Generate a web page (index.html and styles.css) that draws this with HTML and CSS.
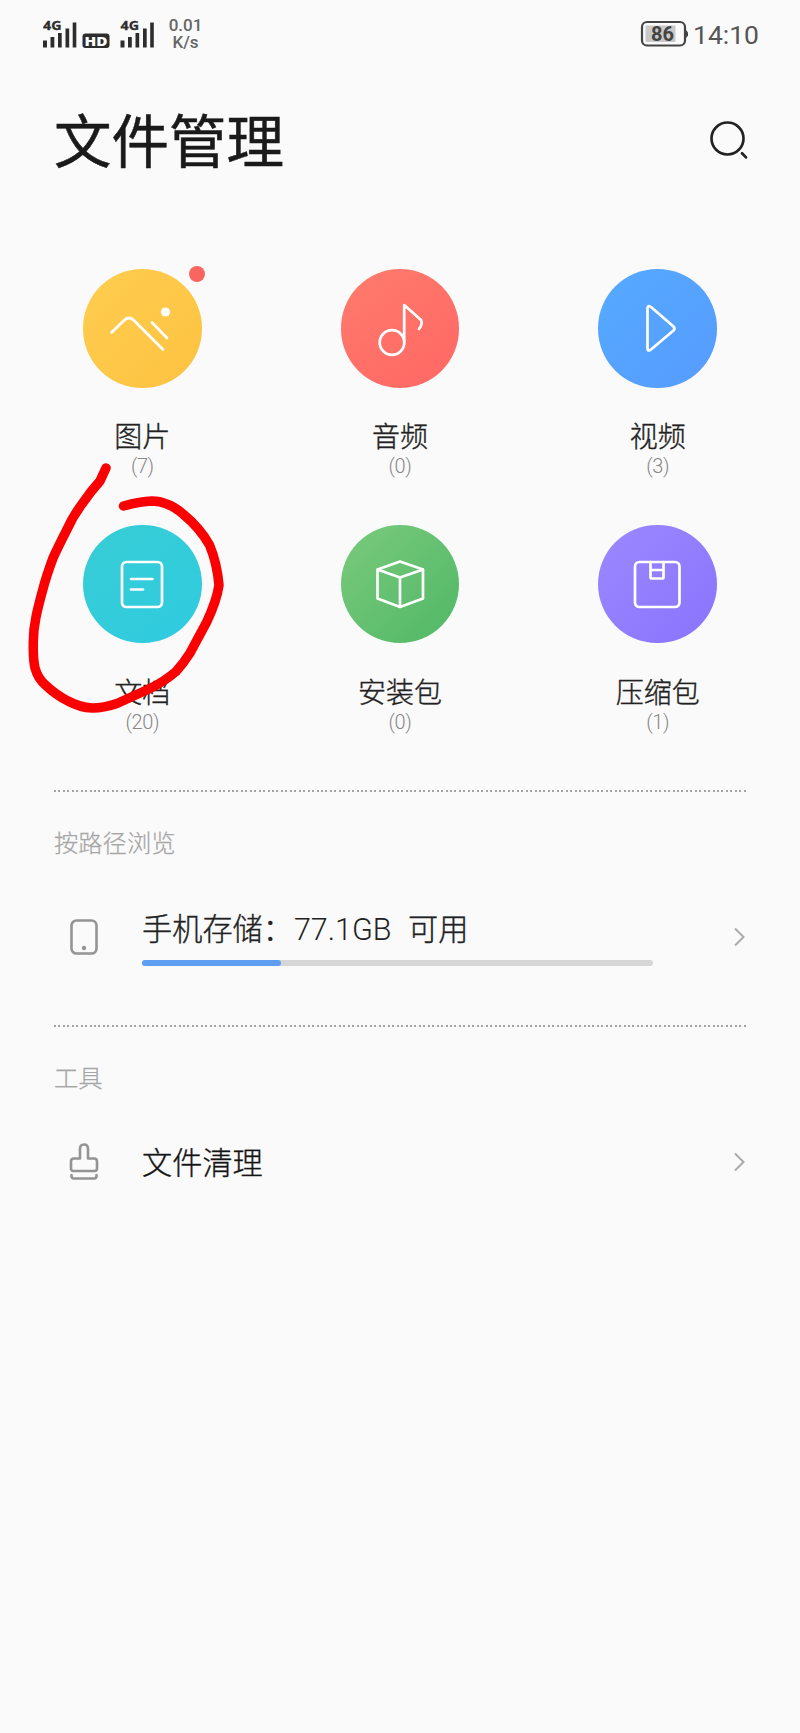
FILE: index.html
```html
<!DOCTYPE html>
<html lang="zh-CN">
<head>
<meta charset="utf-8">
<title>文件管理</title>
<link rel="stylesheet" href="styles.css">
</head>
<body>
<main class="screen">
  <div class="status">
    <svg class="signals" width="130" height="36" viewBox="0 0 130 36">
      <g id="sim" fill="#2d2d2d">
        <text class="net" x="0" y="14.500" textLength="18.500" lengthAdjust="spacingAndGlyphs">4G</text>
        <path d="M0 25.500h4v7H0zM7.500 22h3.800v10.500H7.500zM15 18h3.700v14.500H15zM22.500 13.500h3.700v19h-3.700zM29.700 7.500h3.600v25h-3.600z"/>
      </g>
      <rect x="39.500" y="18.500" width="27" height="14.500" rx="3" fill="#2d2d2d"/>
      <text class="hd" x="41.500" y="30.500" textLength="23" lengthAdjust="spacingAndGlyphs">HD</text>
      <use href="#sim" x="77.500"/>
    </svg>
    <div class="speed"><span>0.01</span><span>K/s</span></div>
    <svg class="battery" width="49" height="28" viewBox="0 0 49 28">
      <rect x="2" y="2" width="43" height="23.500" rx="5" fill="none" stroke="#444" stroke-width="2.200"/>
      <rect x="5.500" y="5.500" width="30" height="16.500" rx="1" fill="#c9c9c9"/>
      <path d="M46 10l2 2.500v3L46 18z" fill="#444"/>
      <text class="charge" x="22.500" y="21" text-anchor="middle">86</text>
    </svg>
    <span class="clock">14:10</span>
  </div>

  <header class="head">
    <h1 class="title">文件管理</h1>
    <svg class="search" width="40" height="40" viewBox="0 0 40 40">
      <circle cx="18.500" cy="18.500" r="16"/><path d="M33 33.200l4 4.200"/>
    </svg>
  </header>

  <section class="grid">
    <div class="item">
      <div class="disc yellow"><svg viewBox="0 0 118 118">
        <path d="M28.500 63.500L41.500 51Q46 47 50.500 51L80 80.500M69 53.500L84 69"/><circle class="dot" cx="82.500" cy="43" r="4.600"/></svg>
        <i class="badge"></i></div>
      <div class="label">图片</div><div class="count">(7)</div>
    </div>
    <div class="item">
      <div class="disc red"><svg viewBox="0 0 118 118">
        <circle cx="51" cy="73.500" r="12.300"/><path d="M63.200 73.500V36L80 51Q82 55 78 60"/></svg></div>
      <div class="label">音频</div><div class="count">(0)</div>
    </div>
    <div class="item">
      <div class="disc blue"><svg viewBox="0 0 118 118">
        <path d="M49.500 39.500Q49.500 35.500 53 38L75.500 57.500Q77.500 59.500 75.500 61.500L53 80.500Q49.500 83 49.500 79.500Z"/></svg></div>
      <div class="label">视频</div><div class="count">(3)</div>
    </div>
    <div class="item">
      <div class="disc teal"><svg viewBox="0 0 118 118">
        <rect x="39" y="37" width="40" height="45" rx="4.500"/><path d="M48 54h21.500M48 64.500h12"/></svg></div>
      <div class="label">文档</div><div class="count">(20)</div>
    </div>
    <div class="item">
      <div class="disc green"><svg viewBox="0 0 118 118">
        <path d="M59 36.500L82 44.500V73.500L59 82 36.500 73.500V44.500ZM36.500 44.500L59 52.500 82 44.500M59 52.500V82"/></svg></div>
      <div class="label">安装包</div><div class="count">(0)</div>
    </div>
    <div class="item">
      <div class="disc purple"><svg viewBox="0 0 118 118">
        <rect x="37" y="37" width="44.500" height="45" rx="4.500"/><path d="M52.500 37v15q0 1.500 1.500 1.500h10q1.500 0 1.500-1.500V37M52.500 45h13"/></svg></div>
      <div class="label">压缩包</div><div class="count">(1)</div>
    </div>
  </section>

  <section class="section">
    <h2 class="caption">按路径浏览</h2>
    <div class="row">
      <svg class="lead" width="30" height="38" viewBox="0 0 30 38">
        <rect x="2.500" y="2.500" width="25" height="33" rx="5"/><circle cx="15" cy="30" r="2.200" fill="#949494" stroke="none"/></svg>
      <div class="body">
        <div class="name storage"><span>手机存储：</span><span class="size">77.1GB</span><span>可用</span></div>
        <div class="bar"><div class="fill" style="width:27.200%"></div></div>
      </div>
      <svg class="chev" width="14" height="22" viewBox="0 0 14 22"><path d="M3 2.500L11.500 11 3 19.500"/></svg>
    </div>
  </section>

  <section class="section tools">
    <h2 class="caption">工具</h2>
    <div class="row">
      <svg class="lead" width="30" height="38" viewBox="0 0 30 38">
        <path d="M11 15.500V6q0-4.500 4-4.500T19 6v9.500h6q3 0 3 3v7q0 2.500-2.500 2.500h-21Q2 28 2 25.500v-7q0-3 3-3zM2.500 32v1q0 2.500 2.500 2.500h20q2.500 0 2.500-2.500v-1"/></svg>
      <div class="body"><div class="name strong">文件清理</div></div>
      <svg class="chev" width="14" height="22" viewBox="0 0 14 22"><path d="M3 2.500L11.500 11 3 19.500"/></svg>
    </div>
  </section>

  <svg class="marker" width="240" height="280" viewBox="0 450 240 280">
    <path d="M106 468L100 481Q91 491 82 504Q73 516 66.700 530Q58 547 53 558Q46 577 42.700 590Q38 607 36 617Q33 631 33.300 645Q33 659 35 668Q38 679 46 685.500Q56 695 68 701Q80 707.500 92 708Q104 708 117 703.500L150 688.500Q165 681 176 671.500Q183 664 190 653L206.700 622Q217 600 219 585Q217 563 209.500 545Q200 528 183 514Q175 507 166.700 504Q160 501 152 501Q140 501.500 123.500 506"/>
  </svg>
</main>
</body>
</html>
```
FILE: styles.css
```css
* { box-sizing: border-box; }
body {
  margin: 0;
  background: #fafafa;
  color: #222;
  font-family: "Noto Sans CJK SC", sans-serif;
}
.screen { position: relative; height: 1733px; overflow: hidden; }

.status { display: flex; align-items: flex-start; height: 96px; padding: 15px 38px 0 43px; font-family: Roboto, sans-serif; }
.signals { flex: none; }
.net { font: 700 12.500px "Open Sans", sans-serif; stroke: #2d2d2d; stroke-width: .3px; }
.hd { font: 800 13px "Open Sans", sans-serif; fill: #fff; }
.speed { display: flex; flex-direction: column; align-items: center; width: 36px; margin-left: -5.500px; margin-top: 2px; font-size: 17px; line-height: 17px; font-weight: 500; color: #666; }
.battery { margin-left: auto; margin-top: 4.500px; }
.charge { font: 700 20px Roboto, sans-serif; fill: #444; }
.clock { width: 69px; margin-left: 4px; margin-top: 4.500px; font-size: 26.500px; line-height: 30px; color: #555; white-space: nowrap; }

.head { display: flex; align-items: center; justify-content: space-between; height: 84px; padding: 0 51px 0 54px; }
.title { margin: 0; font-size: 57.500px; line-height: 84px; font-weight: 400; color: #1a1a1a; -webkit-text-stroke: .5px #1a1a1a; }
.search { margin-top: 4px; fill: none; stroke: #222; stroke-width: 2.700; stroke-linecap: round; }

.grid { display: grid; grid-template-columns: repeat(3, 257.700px); grid-auto-rows: 255.700px; justify-content: center; padding-top: 89px; height: 610px; }
.item { display: flex; flex-direction: column; align-items: center; }
.disc { position: relative; width: 118.500px; height: 118.500px; border-radius: 50%; }
.disc svg { display: block; width: 118px; height: 118px; fill: none; stroke: #fff; stroke-width: 2.700; stroke-linecap: round; stroke-linejoin: round; }
.disc .dot { fill: #fff; stroke: none; }
.yellow { background: linear-gradient(135deg, #ffcd50, #fdc240); }
.red { background: linear-gradient(145deg, #ff7b6c, #ff6764); }
.blue { background: linear-gradient(135deg, #55aaff, #569bff); }
.teal { background: linear-gradient(145deg, #37cdd5, #2fcbe0); }
.green { background: linear-gradient(135deg, #7bca7c, #4fb866); }
.purple { background: linear-gradient(135deg, #9c88ff, #8973fd); }
.badge { position: absolute; top: -3px; right: -3px; width: 16px; height: 16px; border-radius: 50%; background: #f96660; }
.label { margin-top: 29.500px; height: 37px; font-size: 28px; line-height: 36px; font-weight: 300; -webkit-text-stroke: .35px #222; }
.count { height: 24px; font: 300 20px/24px Roboto, sans-serif; letter-spacing: -.4px; color: #888; }

.section { height: 235px; margin: 0 54px; padding-top: 36px; background: repeating-linear-gradient(90deg, #a3a3a3 0 2px, transparent 2px 4.450px) 0 0 / 100% 2px no-repeat; }
.caption { margin: 0; height: 32px; font-size: 24.300px; line-height: 32px; font-weight: 300; color: #a6a6a6; -webkit-text-stroke: .25px #a6a6a6; }
.row { display: flex; align-items: center; height: 60px; margin-top: 49px; padding-left: 15px; }
.lead { fill: none; stroke: #949494; stroke-width: 2.600; stroke-linejoin: round; stroke-linecap: round; }
.body { width: 511px; margin-left: 43px; }
.name { height: 40px; font-size: 30.200px; line-height: 38px; font-weight: 300; white-space: nowrap; -webkit-text-stroke: .35px #222; }
.storage { display: flex; }
.size { width: 115px; padding: 3px 0 0 1px; font-family: Roboto, sans-serif; font-size: 30.500px; -webkit-text-stroke: 0; font-weight: 300; }
.strong { color: #111; }
.bar { height: 6.500px; margin-top: 12px; border-radius: 4px; background: #d6d6d6; }
.fill { height: 6.500px; border-radius: 4px; background: #5e9ef0; }
.chev { margin-left: auto; fill: none; stroke: #aaa; stroke-width: 2; }
.tools .row { margin-top: 39px; }
.marker { position: absolute; left: 0; top: 450px; fill: none; stroke: #fa0000; stroke-width: 9.500; stroke-linecap: round; stroke-linejoin: round; }
```
